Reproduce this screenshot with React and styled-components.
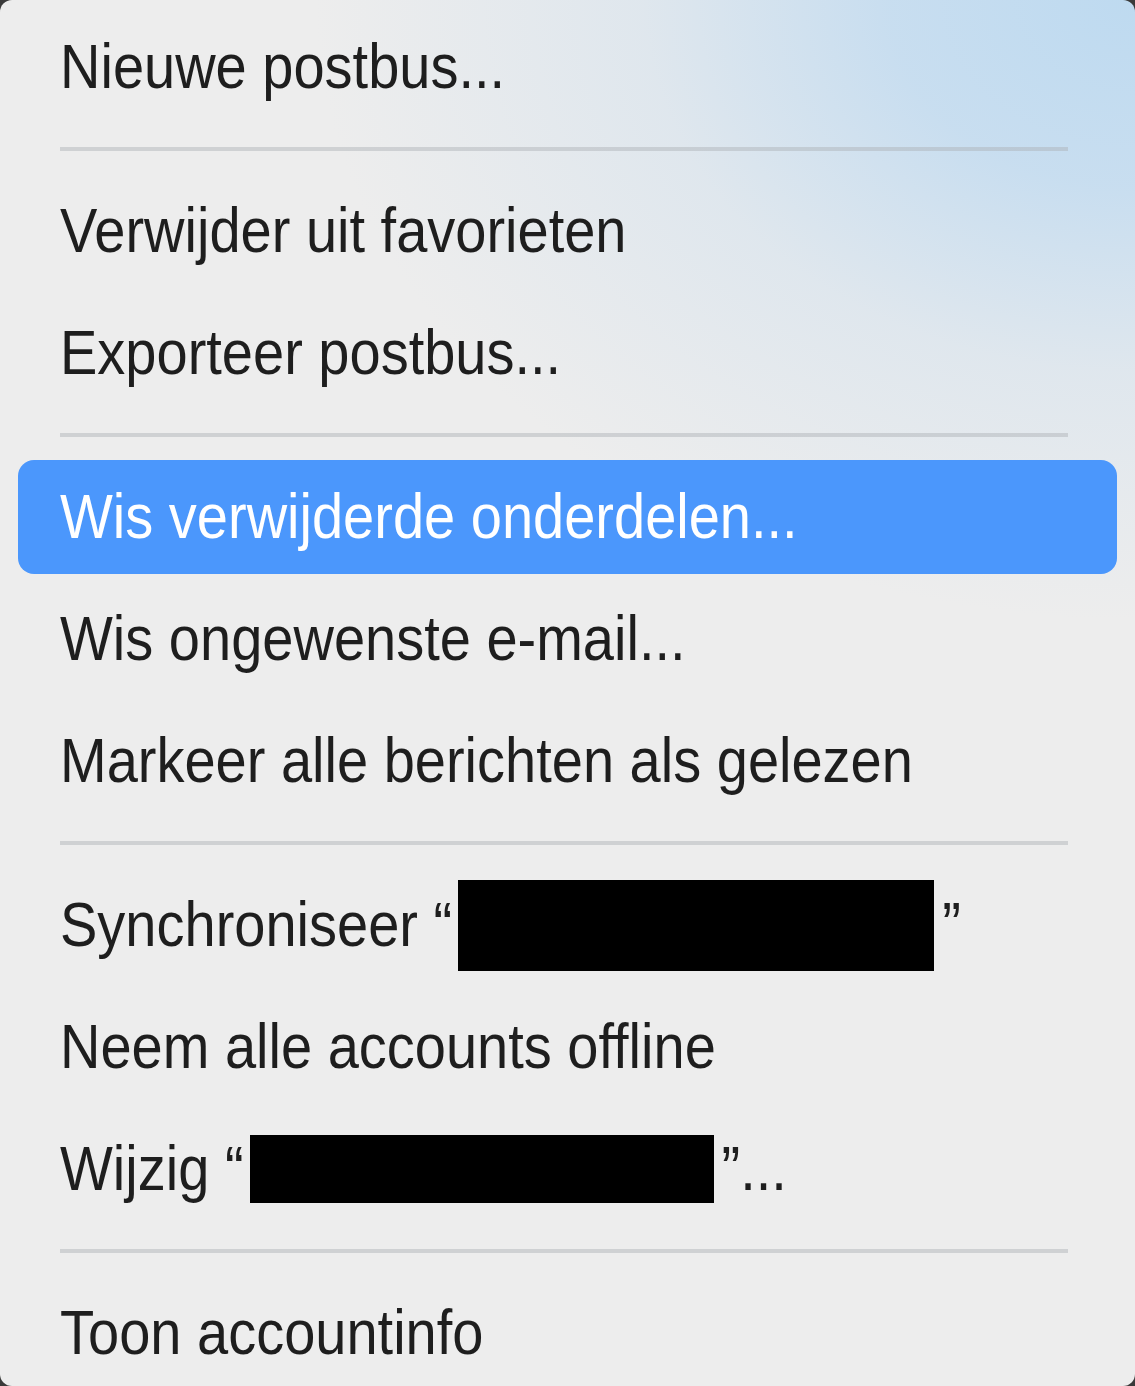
import styled, { createGlobalStyle } from "styled-components";

const GlobalStyle = createGlobalStyle`
  html, body {
    margin: 0;
    padding: 0;
    background: #3a3a3a;
    overflow: hidden;
  }
  body {
    font-family: "Liberation Sans", Arial, sans-serif;
  }
`;

const items = [
  { label: "Nieuwe postbus..." },
  "sep",
  { label: "Verwijder uit favorieten" },
  { label: "Exporteer postbus..." },
  "sep",
  { label: "Wis verwijderde onderdelen...", active: true },
  { label: "Wis ongewenste e-mail..." },
  { label: "Markeer alle berichten als gelezen" },
  "sep",
  { label: "Synchroniseer \u201C", redact: { w: 476, h: 91 }, after: "\u201D" },
  { label: "Neem alle accounts offline" },
  { label: "Wijzig \u201C", redact: { w: 464, h: 68 }, after: "\u201D..." },
  "sep",
  { label: "Toon accountinfo" },
];

const App = () => {
  return (
    <>
      <GlobalStyle />
      <Menu>
        {items.map((item, i) =>
          item === "sep" ? (
            <Separator key={i} />
          ) : (
            <Item key={i} $active={item.active}>
              <Label>{item.label}</Label>
              {item.redact && (
                <Redacted $w={item.redact.w} $h={item.redact.h} />
              )}
              {item.after && <Label $after>{item.after}</Label>}
            </Item>
          )
        )}
      </Menu>
    </>
  );
};

export default App;

const Menu = styled.div`
  width: 1135px;
  height: 1386px;
  box-sizing: border-box;
  padding-top: 6px;
  border-radius: 12px;
  overflow: hidden;
  display: flex;
  flex-direction: column;
  background:
    radial-gradient(
      ellipse 820px 620px at 100% 0%,
      rgba(190, 218, 240, 1) 0%,
      rgba(196, 220, 240, 0.9) 30%,
      rgba(212, 226, 238, 0.55) 60%,
      rgba(236, 236, 236, 0) 100%
    ),
    #ededed;
`;

const Item = styled.div`
  height: 114px;
  margin: 4px 18px;
  padding-left: 42px;
  border-radius: 16px;
  display: flex;
  align-items: center;
  flex-shrink: 0;
  color: ${({ $active }) => ($active ? "#ffffff" : "#1e1e1e")};
  background: ${({ $active }) => ($active ? "#4b97fc" : "transparent")};
`;

const Label = styled.span`
  display: inline-block;
  font-size: 56px;
  line-height: 1;
  white-space: pre;
  transform: scaleY(1.13);
  margin-left: ${({ $after }) => ($after ? "8px" : "0")};
`;

const Redacted = styled.span`
  display: inline-block;
  width: ${({ $w }) => $w}px;
  height: ${({ $h }) => $h}px;
  margin-left: 6px;
  background: #000;
`;

const Separator = styled.div`
  height: 4px;
  margin: 19px 67px 19px 60px;
  flex-shrink: 0;
  background: rgba(170, 175, 180, 0.45);
`;
